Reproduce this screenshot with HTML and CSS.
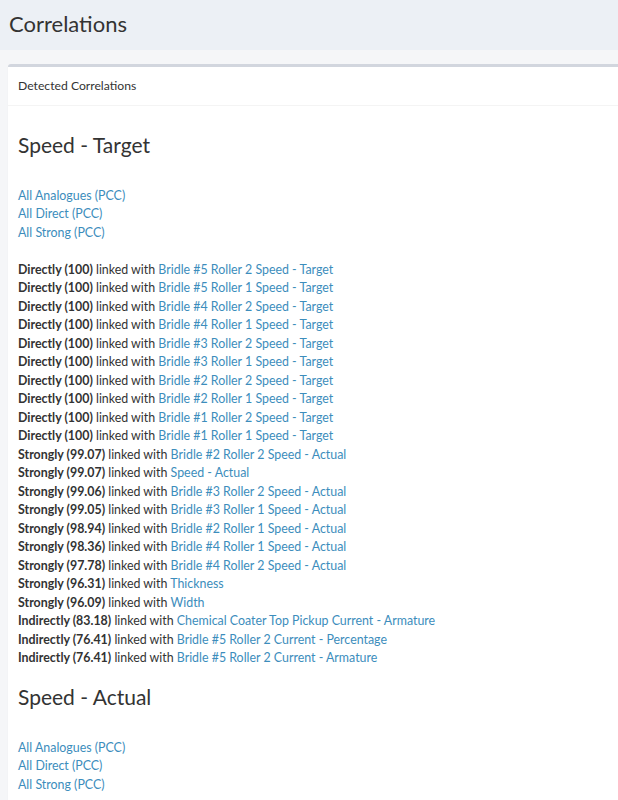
FILE: index.html
```html
<!DOCTYPE html>
<html lang="en">
<head>
    <meta charset="UTF-8">
    <meta name="viewport" content="width=device-width, initial-scale=1.0">
    <title>Correlations</title>
    <link rel="stylesheet" href="styles.css">
</head>
<body>
    <header class="content-header">
        <h1>Correlations</h1>
    </header>
    <section class="content">
        <div class="box">
            <div class="box-header">Detected Correlations</div>
            <div class="box-body">
                <div class="signal">
                    <h3>Speed - Target</h3>
                    <div class="filters">
                        <a href="#">All Analogues (PCC)</a>
                        <a href="#">All Direct (PCC)</a>
                        <a href="#">All Strong (PCC)</a>
                    </div>
                    <div class="links">
                        <div><strong>Directly (100)</strong> linked with <a href="#">Bridle #5 Roller 2 Speed - Target</a></div>
                        <div><strong>Directly (100)</strong> linked with <a href="#">Bridle #5 Roller 1 Speed - Target</a></div>
                        <div><strong>Directly (100)</strong> linked with <a href="#">Bridle #4 Roller 2 Speed - Target</a></div>
                        <div><strong>Directly (100)</strong> linked with <a href="#">Bridle #4 Roller 1 Speed - Target</a></div>
                        <div><strong>Directly (100)</strong> linked with <a href="#">Bridle #3 Roller 2 Speed - Target</a></div>
                        <div><strong>Directly (100)</strong> linked with <a href="#">Bridle #3 Roller 1 Speed - Target</a></div>
                        <div><strong>Directly (100)</strong> linked with <a href="#">Bridle #2 Roller 2 Speed - Target</a></div>
                        <div><strong>Directly (100)</strong> linked with <a href="#">Bridle #2 Roller 1 Speed - Target</a></div>
                        <div><strong>Directly (100)</strong> linked with <a href="#">Bridle #1 Roller 2 Speed - Target</a></div>
                        <div><strong>Directly (100)</strong> linked with <a href="#">Bridle #1 Roller 1 Speed - Target</a></div>
                        <div><strong>Strongly (99.07)</strong> linked with <a href="#">Bridle #2 Roller 2 Speed - Actual</a></div>
                        <div><strong>Strongly (99.07)</strong> linked with <a href="#">Speed - Actual</a></div>
                        <div><strong>Strongly (99.06)</strong> linked with <a href="#">Bridle #3 Roller 2 Speed - Actual</a></div>
                        <div><strong>Strongly (99.05)</strong> linked with <a href="#">Bridle #3 Roller 1 Speed - Actual</a></div>
                        <div><strong>Strongly (98.94)</strong> linked with <a href="#">Bridle #2 Roller 1 Speed - Actual</a></div>
                        <div><strong>Strongly (98.36)</strong> linked with <a href="#">Bridle #4 Roller 1 Speed - Actual</a></div>
                        <div><strong>Strongly (97.78)</strong> linked with <a href="#">Bridle #4 Roller 2 Speed - Actual</a></div>
                        <div><strong>Strongly (96.31)</strong> linked with <a href="#">Thickness</a></div>
                        <div><strong>Strongly (96.09)</strong> linked with <a href="#">Width</a></div>
                        <div><strong>Indirectly (83.18)</strong> linked with <a href="#">Chemical Coater Top Pickup Current - Armature</a></div>
                        <div><strong>Indirectly (76.41)</strong> linked with <a href="#">Bridle #5 Roller 2 Current - Percentage</a></div>
                        <div><strong>Indirectly (76.41)</strong> linked with <a href="#">Bridle #5 Roller 2 Current - Armature</a></div>
                    </div>
                </div>
                <div class="signal">
                    <h3>Speed - Actual</h3>
                    <div class="filters">
                        <a href="#">All Analogues (PCC)</a>
                        <a href="#">All Direct (PCC)</a>
                        <a href="#">All Strong (PCC)</a>
                    </div>
                </div>
            </div>
        </div>
    </section>
</body>
</html>
```

FILE: styles.css
```css
body {
    font-family: Lato, "Liberation Sans", sans-serif;
    font-size: 12.4px;
    line-height: 18.5px;
    margin: 0;
    padding: 0;
    background-color: #f5f6f8;
    color: #333;
    overflow: hidden;
}
a {
    color: #3c8dbc;
    text-decoration: none;
}
.content-header {
    background-color: #ecf0f5;
    height: 50px;
    padding: 0 9px;
    display: flex;
    align-items: center;
}
.content-header h1 {
    margin: 0 0 2px;
    font-size: 22px;
    font-weight: 400;
    line-height: 1.1;
    color: #333;
}
.content {
    padding: 14px 0 0 8px;
}
.box {
    background-color: #fff;
    border-top: 3px solid #d2d6de;
    border-radius: 3px 0 0 0;
    box-shadow: 0 1px 1px rgba(0,0,0,0.1);
    min-height: 733px;
}
.box-header {
    padding: 10px 10px 9px;
    border-bottom: 1px solid #f4f4f4;
    font-size: 12.2px;
}
.box-body {
    padding: 10px;
}
.signal h3 {
    margin: 17px 0 0;
    font-size: 21px;
    font-weight: 400;
    line-height: 23px;
    color: #333;
}
.filters {
    padding-top: 31px;
    display: flex;
    flex-direction: column;
    align-items: flex-start;
}
.links {
    padding-top: 18.5px;
}
.links strong {
    font-weight: 700;
}
```
